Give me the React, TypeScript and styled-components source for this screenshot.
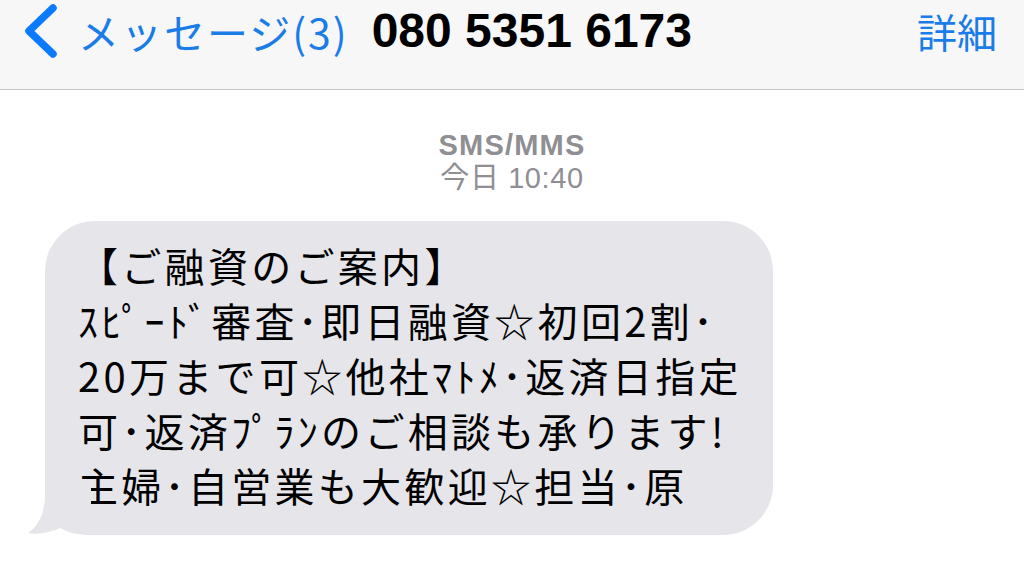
import styled, { createGlobalStyle } from "styled-components";

const GlobalStyle = createGlobalStyle`
  html, body {
    margin: 0;
    padding: 0;
    background: #ffffff;
  }
  body {
    font-family: "Liberation Sans", "Noto Sans CJK JP", sans-serif;
    width: 1024px;
    height: 564px;
    overflow: hidden;
  }
`;

const Screen = styled.div`
  width: 1024px;
  height: 564px;
  background: #ffffff;
  display: flex;
  flex-direction: column;
`;

const NavBar = styled.header`
  height: 90px;
  box-sizing: border-box;
  background: #f7f7f7;
  border-bottom: 1px solid #c6c6c8;
  display: flex;
  align-items: flex-start;
  padding: 4px 27px 0 22px;
`;

const BackButton = styled.div`
  display: flex;
  align-items: center;
  gap: 20px;
  height: 54px;
`;

const BackLabel = styled.span`
  font-family: "Noto Sans CJK JP", sans-serif;
  font-size: 41px;
  color: #1a7ce8;
  letter-spacing: 2px;
  line-height: 1;
`;

const Contact = styled.span`
  font-family: "Liberation Sans", sans-serif;
  font-weight: 700;
  font-size: 48px;
  color: #000;
  margin-left: 23px;
  line-height: 54px;
  letter-spacing: 0px;
`;

const Details = styled.span`
  margin-left: auto;
  font-family: "Noto Sans CJK JP", sans-serif;
  font-size: 40px;
  color: #1a7ce8;
  line-height: 54px;
`;

const Thread = styled.main`
  flex: 1;
  display: flex;
  flex-direction: column;
  padding: 0 0 0 45px;
`;

const Meta = styled.div`
  align-self: center;
  margin: 39px 0 0 -45px;
  display: flex;
  flex-direction: column;
  align-items: center;
  color: #8e8e93;
  font-family: "Liberation Sans", "Noto Sans CJK JP", sans-serif;
`;

const Service = styled.span<{ $bold?: boolean }>`
  font-size: 29px;
  line-height: 33px;
  font-weight: ${(p) => (p.$bold ? 700 : 400)};
  letter-spacing: ${(p) => (p.$bold ? "1.2px" : "0.6px")};
`;

const Bubble = styled.div`
  position: relative;
  margin-top: 26px;
  width: 728px;
  height: 314px;
  box-sizing: border-box;
  padding: 17px 20px 0 33px;
  background: #e5e5ea;
  border-radius: 50px;
  color: #000;
  font-family: "Noto Sans CJK JP", sans-serif;
  font-size: 40px;
  line-height: 55px;
  white-space: pre;
  letter-spacing: 3.3px;
`;

const Tail = styled.svg`
  position: absolute;
  left: -18px;
  bottom: 0;
  width: 64px;
  height: 52px;
`;

const lines = [
  "【ご融資のご案内】",
  "ｽﾋﾟｰﾄﾞ審査･即日融資☆初回2割･",
  "20万まで可☆他社ﾏﾄﾒ･返済日指定",
  "可･返済ﾌﾟﾗﾝのご相談も承ります!",
  "主婦･自営業も大歓迎☆担当･原",
];

function App() {
  return (
    <Screen>
      <GlobalStyle />
      <NavBar>
        <BackButton>
          <svg width="36" height="54" viewBox="0 0 36 54">
            <path
              d="M31 4 L7 27 L31 50"
              fill="none"
              stroke="#0a7aff"
              strokeWidth="7.5"
              strokeLinecap="round"
              strokeLinejoin="round"
            />
          </svg>
          <BackLabel>メッセージ(3)</BackLabel>
        </BackButton>
        <Contact>080 5351 6173</Contact>
        <Details>詳細</Details>
      </NavBar>
      <Thread>
        <Meta>
          <Service $bold>SMS/MMS</Service>
          <Service>今日 10:40</Service>
        </Meta>
        <Bubble>
          <Tail viewBox="0 0 64 52">
            <path
              d="M18 0 L18 12 C18 30 11 44 1 50 C12 52 24 49 33 45 C42 50 52 52 64 52 L64 0 Z"
              fill="#e5e5ea"
            />
          </Tail>
          {lines.join("\n")}
        </Bubble>
      </Thread>
    </Screen>
  );
}

export default App;
